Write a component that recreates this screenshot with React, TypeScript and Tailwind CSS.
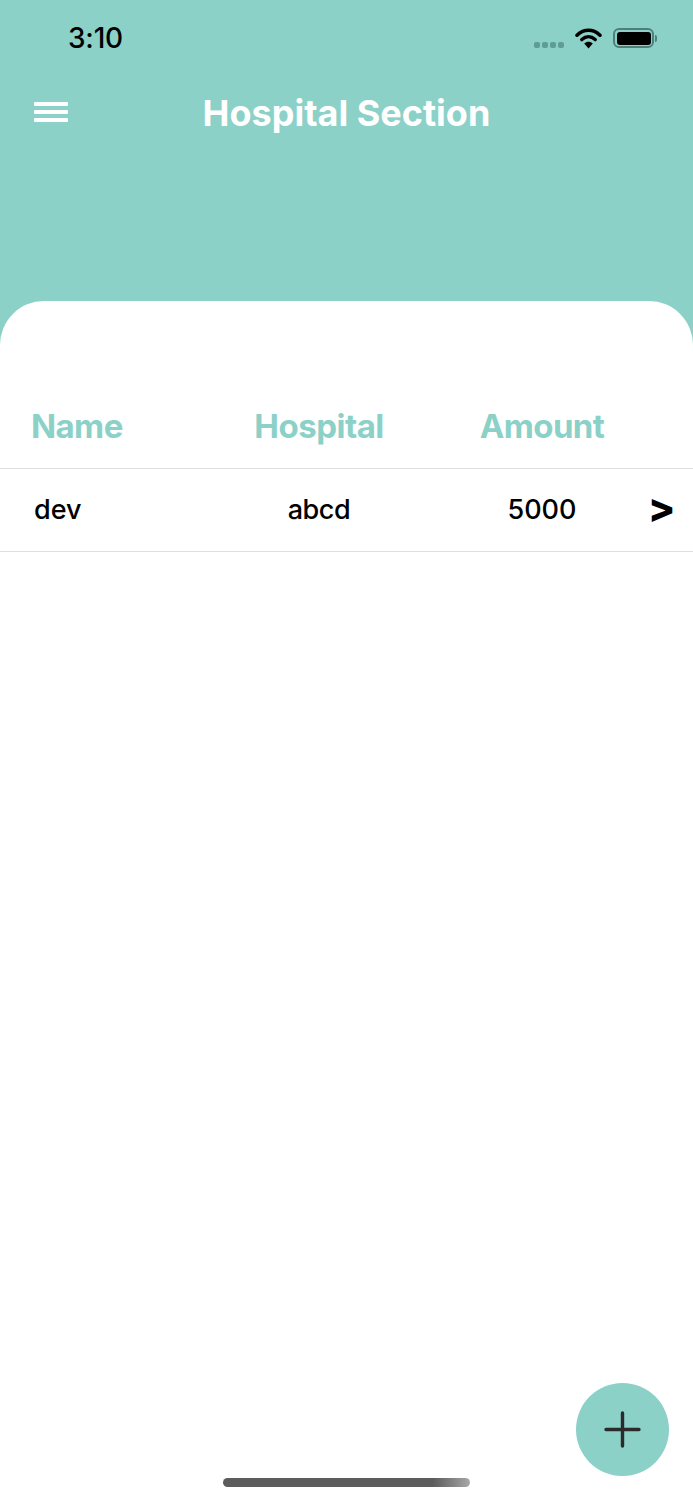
import React from "react"

const sans = "font-['Inter','Liberation_Sans',sans-serif]"

function StatusBar() {
  return (
    <div className="flex items-center justify-between h-[76px] pl-[68px] pr-[36px]">
      <span className="text-[28px] font-medium text-black tracking-[-0.2px] leading-none">3:10</span>
      <div className="flex items-center">
        <div className="flex gap-[2px] mt-[14px] mr-[11px]">
          <span className="w-[6px] h-[6px] rounded-[2px] bg-[#5f9c95]" />
          <span className="w-[6px] h-[6px] rounded-[2px] bg-[#5f9c95]" />
          <span className="w-[6px] h-[6px] rounded-[2px] bg-[#5f9c95]" />
          <span className="w-[6px] h-[6px] rounded-[2px] bg-[#5f9c95]" />
        </div>
        <svg width="27" height="22" viewBox="0 0 27 22" fill="none" className="mr-[11px]">
          <path d="M2 8.2C9 1.6 18 1.6 25 8.2" stroke="black" strokeWidth="3.6" strokeLinecap="round" />
          <path d="M6.8 12.6C11 8.8 16 8.8 20.2 12.6" stroke="black" strokeWidth="3.4" strokeLinecap="round" />
          <path d="M9.2 16.6C11.8 14.2 15.2 14.2 17.8 16.6L13.5 21.4Z" fill="black" />
        </svg>
        <div className="flex items-center">
          <div className="w-[41px] h-[20px] rounded-[6px] border-2 border-[#4f7f79] p-[1.5px]">
            <div className="w-full h-full rounded-[3px] bg-black" />
          </div>
          <div className="w-[2px] h-[7px] rounded-r-full bg-[#4f7f79] ml-[1px]" />
        </div>
      </div>
    </div>
  )
}

export default function App() {
  return (
    <div className={`relative w-[693px] h-[1500px] overflow-hidden bg-[#8bd1c8] flex flex-col ${sans}`}>
      <div className="h-[301px] shrink-0">
        <StatusBar />
        <div className="relative flex items-center justify-center h-[74px]">
          <div className="absolute left-[34px] top-[26px] flex flex-col gap-[4px]">
            <span className="block w-[34px] h-[4px] rounded-[1px] bg-white" />
            <span className="block w-[34px] h-[4px] rounded-[1px] bg-white" />
            <span className="block w-[34px] h-[4px] rounded-[1px] bg-white" />
          </div>
          <h1 className="text-[36px] font-bold text-white leading-none">Hospital Section</h1>
        </div>
      </div>

      <div className="flex-1 bg-white rounded-t-[44px] pt-[85px]">
        <div className="grid grid-cols-[207px_224px_222px_40px] items-center h-[83px] border-b border-[#dedede]">
          <span className="pl-[31px] text-[33px] font-bold text-[#8bd1c8] tracking-[-0.6px]">Name</span>
          <span className="text-center text-[33px] font-bold text-[#8bd1c8] tracking-[-0.5px]">Hospital</span>
          <span className="text-center text-[33px] font-bold text-[#8bd1c8] tracking-[-0.6px]">Amount</span>
          <span />
        </div>
        <div className="grid grid-cols-[207px_224px_222px_40px] items-center h-[83px] pt-[1px] border-b border-[#dedede] text-black">
          <span className="pl-[34px] text-[27px] font-medium">dev</span>
          <span className="text-center text-[27px] font-medium tracking-[-0.4px]">abcd</span>
          <span className="text-center text-[27px] font-medium">5000</span>
          <span className="-ml-[5px] text-[40px] font-extrabold leading-none -translate-y-[3px]">&gt;</span>
        </div>
      </div>

      <button className="absolute left-[576px] top-[1383px] w-[93px] h-[93px] rounded-full bg-[#8bd1c8] flex items-center justify-center">
        <svg width="37" height="37" viewBox="0 0 37 37" fill="none">
          <path d="M18.5 2V35M2 18.5H35" stroke="#2b2b2b" strokeWidth="3.4" strokeLinecap="round" />
        </svg>
      </button>
      <div className="absolute left-[223px] top-[1478px] w-[247px] h-[9px] rounded-full bg-gradient-to-r from-[#5c5c5c] from-[85%] to-[#a8a8a8]" />
    </div>
  )
}
